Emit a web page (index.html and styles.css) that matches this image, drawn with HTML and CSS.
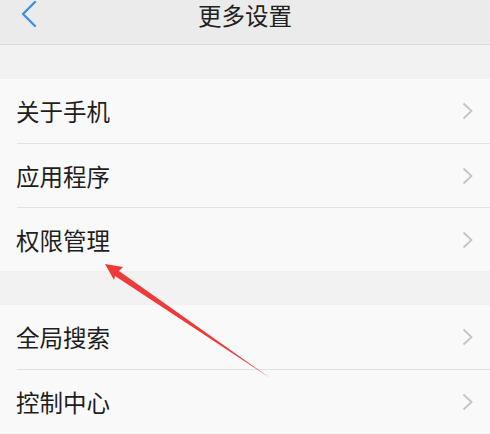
FILE: index.html
```html
<!DOCTYPE html>
<html lang="zh-CN">
<head>
<meta charset="utf-8">
<link rel="stylesheet" href="styles.css">
</head>
<body>
<div class="page">
  <header class="header">
    <svg class="back" width="20" height="30" viewBox="0 0 20 30"><path d="M14 2 L2 14 L14 26" fill="none" stroke="#3d8fe6" stroke-width="2.4" stroke-linecap="round" stroke-linejoin="round"/></svg>
    <div class="title">更多设置</div>
  </header>
  <div class="gap"></div>
  <section class="group">
    <div class="row"><div class="row-inner"><span class="label">关于手机</span><svg class="chev" width="12" height="18" viewBox="0 0 12 18"><path d="M1.5 1.5 L9.5 9 L1.5 16.5" fill="none" stroke="#c4c4c4" stroke-width="1.8"/></svg></div></div>
    <div class="row"><div class="row-inner sep"><span class="label">应用程序</span><svg class="chev" width="12" height="18" viewBox="0 0 12 18"><path d="M1.5 1.5 L9.5 9 L1.5 16.5" fill="none" stroke="#c4c4c4" stroke-width="1.8"/></svg></div></div>
    <div class="row"><div class="row-inner sep"><span class="label">权限管理</span><svg class="chev" width="12" height="18" viewBox="0 0 12 18"><path d="M1.5 1.5 L9.5 9 L1.5 16.5" fill="none" stroke="#c4c4c4" stroke-width="1.8"/></svg></div></div>
  </section>
  <div class="gap"></div>
  <section class="group">
    <div class="row"><div class="row-inner"><span class="label">全局搜索</span><svg class="chev" width="12" height="18" viewBox="0 0 12 18"><path d="M1.5 1.5 L9.5 9 L1.5 16.5" fill="none" stroke="#c4c4c4" stroke-width="1.8"/></svg></div></div>
    <div class="row"><div class="row-inner sep"><span class="label">控制中心</span><svg class="chev" width="12" height="18" viewBox="0 0 12 18"><path d="M1.5 1.5 L9.5 9 L1.5 16.5" fill="none" stroke="#c4c4c4" stroke-width="1.8"/></svg></div></div>
  </section>
  <svg class="arrow" width="490" height="434" viewBox="0 0 490 434">
    <polygon points="105,264 123,267 119,271 270,378 115,276 114,280" fill="#f03a3a"/>
  </svg>
</div>
</body>
</html>
```
FILE: styles.css
```css
html, body {
  margin: 0;
  padding: 0;
  background: #f2f2f2;
}
.page {
  position: relative;
  width: 490px;
  height: 434px;
  overflow: hidden;
  font-family: "Noto Sans CJK SC", "Noto Sans", sans-serif;
  color: #1e1e1e;
}
.header {
  height: 44px;
  background: #ebebeb;
  border-bottom: 1px solid #dadada;
  position: relative;
  display: flex;
  justify-content: center;
  align-items: flex-start;
}
.back {
  position: absolute;
  left: 21px;
  top: 0;
}
.title {
  font-size: 23.5px;
  line-height: 28px;
  padding-top: 1px;
  color: #202020;
}
.gap {
  height: 34px;
  background: #f2f2f2;
}
.group {
  background: #f9f9f9;
}
.row {
  padding-left: 17px;
}
.row-inner {
  height: 64px;
  display: flex;
  align-items: center;
  justify-content: space-between;
  padding-right: 16px;
}
.row-inner.sep {
  border-top: 1px solid #e2e2e2;
  height: 63px;
}
.label {
  font-size: 23.5px;
  line-height: 28px;
  margin-left: -1px;
}
.chev {
  display: block;
}
.arrow {
  position: absolute;
  left: 0;
  top: 0;
  pointer-events: none;
}
```
